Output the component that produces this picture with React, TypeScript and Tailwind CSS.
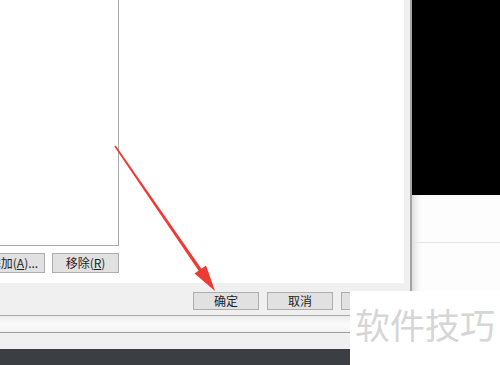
const FONT = { fontFamily: '"Noto Sans CJK SC", "Liberation Sans", sans-serif' };

function WinButton({
  children,
  className = "",
}: {
  children?: React.ReactNode;
  className?: string;
}) {
  return (
    <div
      className={`flex items-center justify-center shrink-0 bg-[#e1e1e1] border border-[#adadad] text-[12px] leading-none text-[#1e1e1e] ${className}`}
    >
      {children}
    </div>
  );
}

function Arrow() {
  // tapered red arrow pointing at the OK button
  return (
    <svg
      className="absolute left-0 top-0 pointer-events-none"
      width="500"
      height="365"
      viewBox="0 0 500 365"
    >
      <polygon
        points="115.7,145.5 201.8,269.2 199,271.2 114.3,146.5"
        fill="#ec3a36"
      />
      <polygon points="215,291 194.5,273.6 206.1,265.6" fill="#ec3a36" />
    </svg>
  );
}

export default function App() {
  return (
    <div
      className="relative w-[500px] h-[365px] overflow-hidden bg-[#f0f0f0] flex flex-col"
      style={FONT}
    >
      <div className="flex h-[316px] shrink-0">
        {/* dialog */}
        <div className="w-[412px] flex flex-col bg-[#f0f0f0] border-r-2 border-r-[#a3a3a3] border-b border-b-[#a8a8a8]">
          <div className="w-[404px] h-[283px] bg-white flex flex-col">
            <div className="ml-[-22px] mt-[-10px] w-[141px] h-[256px] border border-[#a9a9a9] bg-white" />
            <div className="flex gap-[7px] ml-[-22px] mt-[7px]">
              <WinButton className="w-[67px] h-[20px]">
                <span className="pl-[4px]">
                  添加(<span className="underline">A</span>)...
                </span>
              </WinButton>
              <WinButton className="w-[67px] h-[20px]">
                移除(<span className="underline">R</span>)
              </WinButton>
            </div>
          </div>
          <div className="flex gap-[8px] pl-[193px] pt-[9px]">
            <WinButton className="w-[66px] h-[18px] border-[#3c7fb1]">
              确定
            </WinButton>
            <WinButton className="w-[66px] h-[18px]">取消</WinButton>
            <WinButton className="w-[66px] h-[18px]" />
          </div>
        </div>
        {/* window behind, right side */}
        <div className="flex-1 flex flex-col">
          <div className="h-[195px] bg-black" />
          <div className="flex-1 bg-[#fdfdfd] shadow-[inset_8px_0_8px_-6px_rgba(0,0,0,0.18)] flex flex-col">
            <div className="h-[47px]" />
            <div className="h-px bg-[#e4e4e4]" />
          </div>
        </div>
      </div>
      {/* strips of the window below */}
      <div className="h-[16px] bg-gradient-to-b from-[#ececec] via-[#fbfbfb] to-[#f3f3f3]" />
      <div className="h-px bg-[#9d9d9d]" />
      <div className="h-[16px] bg-[#f0f0f0]" />
      <div className="flex-1 bg-[#3b3e43]" />

      <Arrow />

      {/* watermark */}
      <div className="absolute left-[350px] top-[291px] w-[150px] h-[74px] bg-white flex items-start pl-[5px] pt-[13px]">
        <span className="text-[35px] leading-[40px] text-[#d6d6d6]">
          软件技巧
        </span>
      </div>
    </div>
  );
}
